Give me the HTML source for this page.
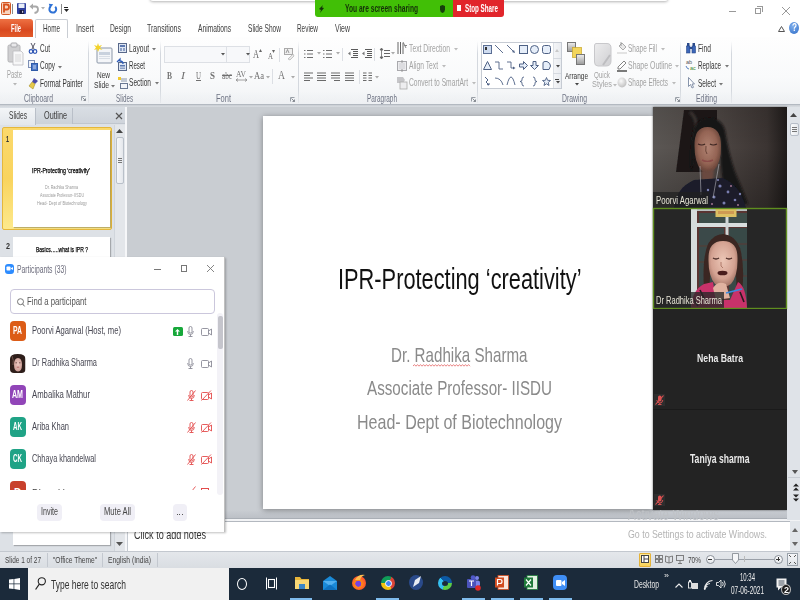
<!DOCTYPE html>
<html><head><meta charset="utf-8">
<style>
*{margin:0;padding:0;box-sizing:border-box}
html,body{width:800px;height:600px;overflow:hidden;background:#fff;font-family:"Liberation Sans",sans-serif;position:relative}
.a{position:absolute}
.t{position:absolute;white-space:nowrap;line-height:1;transform-origin:0 0}
svg{position:absolute;overflow:visible}
</style></head><body>
<div class="a" style="left:0;top:0;width:800px;height:37px;background:#fff"></div>
<div class="a" style="left:0;top:37px;width:800px;height:1px;background:#d3d7dd"></div>
<div class="a" style="left:0;top:37px;width:800px;height:67px;background:linear-gradient(#fefefe 0%,#f9fafb 60%,#f1f3f5 100%)"></div>
<div class="a" style="left:0;top:104px;width:800px;height:1px;background:#b3b9c1"></div>
<div class="a" style="left:0;top:105px;width:800px;height:2px;background:linear-gradient(#c9cdd3,#d8dce1)"></div>
<div class="a" style="left:0;top:107px;width:125px;height:444px;background:#dde1e6"></div>
<div class="a" style="left:125px;top:107px;width:2px;height:444px;background:#f6f7f9"></div>
<div class="a" style="left:127px;top:107px;width:673px;height:413px;background:#c9cdd2"></div>
<div class="a" style="left:127px;top:510px;width:660px;height:8px;background:linear-gradient(#c9cdd2,#bcc0c6)"></div>
<div class="a" style="left:127px;top:518px;width:673px;height:1px;background:#a9aeb5"></div>
<div class="a" style="left:127px;top:519px;width:673px;height:2px;background:#f2f3f5"></div>
<div class="a" style="left:127px;top:521px;width:673px;height:1px;background:#b3b8bf"></div>
<div class="a" style="left:263px;top:116px;width:390px;height:393px;background:#fff;box-shadow:0 1px 6px rgba(0,0,0,.38)"></div>
<div class="a" style="left:653px;top:107px;width:134px;height:403px;background:#232323;box-shadow:0 0 2px rgba(0,0,0,.6)"></div>
<div class="a" style="left:787px;top:107px;width:13px;height:413px;background:#dfe3e8"></div>
<div class="a" style="left:127px;top:522px;width:663px;height:29px;background:#fff;border-left:1px solid #c5cad1"></div>
<div class="a" style="left:790px;top:521px;width:10px;height:30px;background:#e1e5ea"></div>
<div class="a" style="left:0;top:551px;width:800px;height:17px;background:linear-gradient(#e4e7eb,#d9dde2);border-top:1px solid #c3c8cf"></div>
<div class="a" style="left:0;top:568px;width:800px;height:32px;background:#1b2a3a"></div>
<div class="a" style="left:28px;top:568px;width:201px;height:32px;background:#f1f1f1"></div>
<svg style="left:1px;top:2px" width="10" height="13"><rect x="0.5" y="0.5" width="9" height="12" rx="1" fill="#f8d5c0" stroke="#d35a26"/><path d="M3 10.5 V2.5 H5.8 Q8 2.5 8 5 Q8 7.5 5.8 7.5 H3" stroke="#d8501c" stroke-width="1.8" fill="none"/></svg>
<div class="a" style="left:12px;top:4px;width:1px;height:10px;background:#8b8b8b"></div>
<svg style="left:17px;top:3px" width="9" height="11"><rect x="0" y="0" width="9" height="11" rx="1" fill="#2e3f9e"/><rect x="1.5" y="0.5" width="6" height="4.5" fill="#e8eef8"/><rect x="2.5" y="7" width="4.5" height="4" fill="#1a1a40"/><rect x="5" y="7.8" width="1.2" height="2" fill="#ccd"/></svg>
<svg style="left:29px;top:3px" width="10" height="11"><path d="M3 3.5 L6.5 3.5 Q9 3.5 9 6.5 Q9 9.5 5.5 10" stroke="#a8a8a8" stroke-width="1.8" fill="none"/><path d="M0.5 3.5 L4 0.5 L4 6.5 Z" fill="#a8a8a8"/></svg>
<svg style="left:41px;top:7px" width="4" height="3"><path d="M0 0 L4 0 L2 2.5Z" fill="#b0b0b0"/></svg>
<svg style="left:48px;top:3px" width="10" height="11"><path d="M7.2 3.8 A3.4 3.4 0 1 1 2.6 3.6" stroke="#2f72d6" stroke-width="2" fill="none"/><path d="M0.8 0.8 L5.2 1.2 L2.2 5.2 Z" fill="#2f72d6"/></svg>
<div class="a" style="left:61px;top:4px;width:1px;height:10px;background:#8b8b8b"></div>
<div class="a" style="left:64px;top:7px;width:4px;height:1px;background:#222"></div>
<svg style="left:64px;top:9px" width="5" height="3"><path d="M0 0 L5 0 L2.5 3Z" fill="#222"/></svg>
<div class="a" style="left:729px;top:11px;width:7px;height:1px;background:#999"></div>
<div class="a" style="left:755px;top:8px;width:6px;height:6px;border:1px solid #999;background:#fff"></div>
<div class="a" style="left:757px;top:6px;width:6px;height:6px;border-top:1px solid #999;border-right:1px solid #999"></div>
<svg style="left:782px;top:7px" width="8" height="8"><path d="M0 0 L8 8 M8 0 L0 8" stroke="#999" stroke-width="1"/></svg>
<div class="a" style="left:150px;top:-8px;width:518px;height:9px;background:#fff;box-shadow:0 1px 3px rgba(0,0,0,.3);border-radius:3px"></div>
<div class="a" style="left:315px;top:0;width:138px;height:17px;background:#41bf06;border-radius:0 0 0 3px"></div>
<div class="a" style="left:453px;top:0;width:51px;height:17px;background:#e1252b;border-radius:0 0 3px 0"></div>
<svg style="left:318px;top:5px" width="7" height="8"><path d="M5 0 L1 4 L3 5 L2 8 L6 3 L4 2.5 Z" fill="#15380a"/></svg>
<span class="t" id="t0" style="left:344.5px;top:3.14px;font-size:11.59px;color:#15300a;font-weight:bold;font-family:'Liberation Sans',sans-serif;;transform:scaleX(0.5739);">You are screen sharing</span>
<svg style="left:440px;top:5px" width="5" height="8"><path d="M2.5 0 L5 1 L5 4.5 Q5 7 2.5 8 Q0 7 0 4.5 L0 1 Z" fill="#16400c"/></svg>
<div class="a" style="left:457px;top:5px;width:4px;height:6px;background:#fff"></div>
<span class="t" id="t1" style="left:465px;top:3.26px;font-size:10.87px;color:#fff;font-weight:bold;font-family:'Liberation Sans',sans-serif;;transform:scaleX(0.5756);">Stop Share</span>
<div class="a" style="left:0;top:19px;width:33px;height:18px;background:linear-gradient(#ee7143,#d9491f 60%,#e25a2a);border-radius:0 3px 0 0"></div>
<span class="t" id="t2" style="left:11px;top:23.58px;font-size:10.14px;color:#fff;font-weight:bold;font-family:'Liberation Sans',sans-serif;;transform:scaleX(0.5730);">File</span>
<div class="a" style="left:35px;top:19px;width:33px;height:19px;background:#fff;border:1px solid #c9cdd3;border-bottom:none;border-radius:2px 2px 0 0"></div>
<span class="t" id="t3" style="left:43px;top:23.58px;font-size:10.14px;color:#404040;font-weight:normal;font-family:'Liberation Sans',sans-serif;;transform:scaleX(0.6293);">Home</span>
<span class="t" id="t4" style="left:76px;top:23.58px;font-size:10.14px;color:#404040;font-weight:normal;font-family:'Liberation Sans',sans-serif;;transform:scaleX(0.7107);">Insert</span>
<span class="t" id="t5" style="left:110px;top:23.58px;font-size:10.14px;color:#404040;font-weight:normal;font-family:'Liberation Sans',sans-serif;;transform:scaleX(0.6660);">Design</span>
<span class="t" id="t6" style="left:147px;top:23.58px;font-size:10.14px;color:#404040;font-weight:normal;font-family:'Liberation Sans',sans-serif;;transform:scaleX(0.6917);">Transitions</span>
<span class="t" id="t7" style="left:198px;top:23.58px;font-size:10.14px;color:#404040;font-weight:normal;font-family:'Liberation Sans',sans-serif;;transform:scaleX(0.6588);">Animations</span>
<span class="t" id="t8" style="left:248px;top:23.58px;font-size:10.14px;color:#404040;font-weight:normal;font-family:'Liberation Sans',sans-serif;;transform:scaleX(0.6514);">Slide Show</span>
<span class="t" id="t9" style="left:297px;top:23.58px;font-size:10.14px;color:#404040;font-weight:normal;font-family:'Liberation Sans',sans-serif;;transform:scaleX(0.6325);">Review</span>
<span class="t" id="t10" style="left:335px;top:23.58px;font-size:10.14px;color:#404040;font-weight:normal;font-family:'Liberation Sans',sans-serif;;transform:scaleX(0.6892);">View</span>
<svg style="left:778px;top:26px" width="7" height="6"><path d="M0.5 5.5 L3.5 0.5 L6.5 5.5 Z" stroke="#555" stroke-width="1" fill="none"/></svg>
<div class="a" style="left:789px;top:22px;width:10px;height:12px;border-radius:50%;background:radial-gradient(circle at 40% 35%,#7fb0ee,#2f6bc6)"></div>
<span class="t" id="t11" style="left:791.5px;top:22.88px;font-size:10.14px;color:#fff;font-weight:bold;font-family:'Liberation Sans',sans-serif;;transform:scaleX(0.8081);">?</span>
<div class="a" style="left:0;top:92px;width:800px;height:12px;background:linear-gradient(rgba(240,242,245,0),#eef0f3)"></div>
<div class="a" style="left:88px;top:41px;width:1px;height:62px;background:linear-gradient(rgba(210,214,220,0),#d4d8de 20%,#d4d8de 80%,rgba(210,214,220,.3))"></div>
<div class="a" style="left:160px;top:41px;width:1px;height:62px;background:linear-gradient(rgba(210,214,220,0),#d4d8de 20%,#d4d8de 80%,rgba(210,214,220,.3))"></div>
<div class="a" style="left:298px;top:41px;width:1px;height:62px;background:linear-gradient(rgba(210,214,220,0),#d4d8de 20%,#d4d8de 80%,rgba(210,214,220,.3))"></div>
<div class="a" style="left:477px;top:41px;width:1px;height:62px;background:linear-gradient(rgba(210,214,220,0),#d4d8de 20%,#d4d8de 80%,rgba(210,214,220,.3))"></div>
<div class="a" style="left:680px;top:41px;width:1px;height:62px;background:linear-gradient(rgba(210,214,220,0),#d4d8de 20%,#d4d8de 80%,rgba(210,214,220,.3))"></div>
<div class="a" style="left:731px;top:41px;width:1px;height:62px;background:linear-gradient(rgba(210,214,220,0),#d4d8de 20%,#d4d8de 80%,rgba(210,214,220,.3))"></div>
<svg style="left:7px;top:42px" width="16" height="24"><rect x="1" y="3" width="12" height="17" rx="1.5" fill="#cfcfd1" stroke="#b4b4b7"/><rect x="4" y="1" width="6" height="4" rx="1" fill="#e8e8ea" stroke="#a9a9ad"/><path d="M6 9 L14 9 L16 11 L16 23 L6 23 Z" fill="#f7f7f8" stroke="#bcbcc0" stroke-width="0.8"/><path d="M8 13h6M8 15h6M8 17h6M8 19h6" stroke="#c9c9cc" stroke-width="0.7"/></svg>
<span class="t" id="t12" style="left:7px;top:70.08px;font-size:10.14px;color:#a3a3a3;font-weight:normal;font-family:'Liberation Sans',sans-serif;;transform:scaleX(0.5790);">Paste</span>
<svg style="left:13.0px;top:83px" width="4" height="3"><path d="M0 0 L4 0 L2 2.5Z" fill="#b5b5b5"/></svg>
<svg style="left:29px;top:43px" width="8" height="11"><path d="M2 0 L5 6 M6 0 L3 6" stroke="#556" stroke-width="1"/><circle cx="2" cy="8.5" r="1.8" stroke="#2c54b4" stroke-width="1.2" fill="none"/><circle cx="6" cy="8.5" r="1.8" stroke="#2c54b4" stroke-width="1.2" fill="none"/></svg>
<span class="t" id="t13" style="left:40px;top:44.08px;font-size:10.14px;color:#363636;font-weight:normal;font-family:'Liberation Sans',sans-serif;;transform:scaleX(0.6343);">Cut</span>
<svg style="left:28px;top:60px" width="10" height="11"><rect x="0.5" y="0.5" width="6" height="7" fill="#eef2fa" stroke="#7d8fb5"/><rect x="3.5" y="3.5" width="6" height="7" fill="#4c79c9" stroke="#2f5aa8"/><path d="M5 6h3M5 8h3" stroke="#fff" stroke-width="0.7"/></svg>
<span class="t" id="t14" style="left:40px;top:61.08px;font-size:10.14px;color:#363636;font-weight:normal;font-family:'Liberation Sans',sans-serif;;transform:scaleX(0.6345);">Copy</span>
<svg style="left:58.0px;top:66px" width="4" height="3"><path d="M0 0 L4 0 L2 2.5Z" fill="#777"/></svg>
<svg style="left:29px;top:78px" width="9" height="11"><path d="M5 0 L9 3 L6 6 L3 4Z" fill="#4a4aa8"/><path d="M3 4 L6 6 L4 11 L0 8Z" fill="#e6c84a" stroke="#a8902a" stroke-width="0.6"/></svg>
<span class="t" id="t15" style="left:40px;top:79.08px;font-size:10.14px;color:#363636;font-weight:normal;font-family:'Liberation Sans',sans-serif;;transform:scaleX(0.6421);">Format Painter</span>
<span class="t" id="t16" style="left:24px;top:94.08px;font-size:10.14px;color:#6f7484;font-weight:normal;font-family:'Liberation Sans',sans-serif;;transform:scaleX(0.6691);">Clipboard</span>
<svg style="left:81px;top:96px" width="5" height="5"><path d="M0.5 4.5 L0.5 0.5 L4.5 0.5" stroke="#9aa0a8" fill="none" stroke-width="1"/><path d="M1.5 1.5 L4.5 4.5 M4.5 2.5 L4.5 4.5 L2.5 4.5" stroke="#7a8088" fill="none" stroke-width="0.9"/></svg>
<svg style="left:94px;top:43px" width="19" height="22"><rect x="3" y="5" width="15" height="15" rx="1" fill="#f4f6f9" stroke="#8b97a8"/><rect x="5" y="9" width="11" height="3" fill="#c9d2de"/><rect x="5" y="13" width="11" height="1" fill="#d8dee6"/><rect x="5" y="15" width="11" height="1" fill="#d8dee6"/><path d="M4 0 L5 3 L8 2 L6 4.5 L8.5 7 L5.3 6 L4 9 L3 6 L0 7 L2 4.5 L0 2 L3 3Z" fill="#f3d22a"/></svg>
<span class="t" id="t17" style="left:97px;top:70.56px;font-size:8.99px;color:#363636;font-weight:normal;font-family:'Liberation Sans',sans-serif;;transform:scaleX(0.7228);">New</span>
<span class="t" id="t18" style="left:94px;top:80.54px;font-size:9.13px;color:#363636;font-weight:normal;font-family:'Liberation Sans',sans-serif;;transform:scaleX(0.7390);">Slide</span>
<svg style="left:110.5px;top:85px" width="4" height="3"><path d="M0 0 L4 0 L2 2.5Z" fill="#777"/></svg>
<svg style="left:118px;top:43px" width="9" height="10"><rect x="0.5" y="0.5" width="8" height="9" fill="#dfe7f3" stroke="#58688a"/><rect x="2" y="2" width="5" height="2" fill="#5c78b0"/><rect x="2" y="5" width="2" height="3" fill="#8da0c5"/><rect x="5" y="5" width="2" height="3" fill="#8da0c5"/></svg>
<span class="t" id="t19" style="left:129px;top:44.08px;font-size:10.14px;color:#363636;font-weight:normal;font-family:'Liberation Sans',sans-serif;;transform:scaleX(0.6578);">Layout</span>
<svg style="left:151.5px;top:48px" width="4" height="3"><path d="M0 0 L4 0 L2 2.5Z" fill="#777"/></svg>
<svg style="left:117px;top:59px" width="10" height="12"><rect x="1.5" y="3.5" width="8" height="8" fill="#dfe7f3" stroke="#58688a"/><rect x="3" y="6" width="5" height="1.5" fill="#5c78b0"/><rect x="3" y="8.5" width="5" height="1.5" fill="#8da0c5"/><path d="M0 3 L3 0 L3 2 Q6 2 6 5" stroke="#2d5bb8" stroke-width="1.3" fill="none"/></svg>
<span class="t" id="t20" style="left:129px;top:61.08px;font-size:10.14px;color:#363636;font-weight:normal;font-family:'Liberation Sans',sans-serif;;transform:scaleX(0.6048);">Reset</span>
<svg style="left:118px;top:77px" width="10" height="12"><rect x="0" y="0" width="3" height="3" fill="#f2c92b"/><path d="M3 2 H9 M3 4 H9" stroke="#7d8aa0" stroke-width="0.9"/><rect x="2.5" y="6.5" width="7" height="5" fill="#f2f4f8" stroke="#6a7892"/></svg>
<span class="t" id="t21" style="left:129px;top:78.08px;font-size:10.14px;color:#363636;font-weight:normal;font-family:'Liberation Sans',sans-serif;;transform:scaleX(0.6512);">Section</span>
<svg style="left:154.5px;top:82px" width="4" height="3"><path d="M0 0 L4 0 L2 2.5Z" fill="#777"/></svg>
<span class="t" id="t22" style="left:116px;top:94.08px;font-size:10.14px;color:#6f7484;font-weight:normal;font-family:'Liberation Sans',sans-serif;;transform:scaleX(0.6164);">Slides</span>
<div class="a" style="left:164px;top:46px;width:86px;height:17px;border:1px solid #dde0e5;background:#f7f8fa"></div>
<div class="a" style="left:226px;top:46px;width:1px;height:17px;background:#dde0e5"></div>
<svg style="left:220.5px;top:53px" width="4" height="3"><path d="M0 0 L4 0 L2 2.5Z" fill="#555"/></svg>
<svg style="left:245.5px;top:53px" width="4" height="3"><path d="M0 0 L4 0 L2 2.5Z" fill="#555"/></svg>
<span class="t" id="t23" style="left:253px;top:49.14px;font-size:11.59px;color:#666;font-weight:normal;font-family:'Liberation Serif',sans-serif;;transform:scaleX(0.7164);">A</span>
<svg style="left:259px;top:49px" width="3" height="3"><path d="M0 3 L1.5 0 L3 3Z" fill="#666"/></svg>
<span class="t" id="t24" style="left:268px;top:51.61px;font-size:8.70px;color:#666;font-weight:normal;font-family:'Liberation Serif',sans-serif;;transform:scaleX(0.7960);">A</span>
<svg style="left:272px;top:50px" width="3" height="3"><path d="M0 0 L3 0 L1.5 3Z" fill="#666"/></svg>
<div class="a" style="left:279px;top:48px;width:1px;height:14px;background:#dcdfe4"></div>
<svg style="left:284px;top:48px" width="10" height="12"><rect x="0.5" y="0.5" width="8" height="6" fill="#f0f0f0" stroke="#aaa"/><path d="M2 5 L3.5 1.5 L5 5" stroke="#777" stroke-width="0.7" fill="none"/><path d="M4 11 L9 6 L10 8 L6 12Z" fill="#e9e9e9" stroke="#a5a5a5" stroke-width="0.6"/></svg>
<span class="t" id="t25" style="left:167px;top:71.38px;font-size:10.14px;color:#707070;font-weight:normal;font-family:'Liberation Serif',sans-serif;font-weight:bold;transform:scaleX(0.7390);">B</span>
<span class="t" id="t26" style="left:181px;top:71.38px;font-size:10.14px;color:#707070;font-weight:normal;font-family:'Liberation Serif',sans-serif;font-style:italic;transform:scaleX(1.1852);">I</span>
<span class="t" id="t27" style="left:196px;top:71.38px;font-size:10.14px;color:#707070;font-weight:normal;font-family:'Liberation Serif',sans-serif;text-decoration:underline;transform:scaleX(0.6838);">U</span>
<span class="t" id="t28" style="left:210px;top:71.38px;font-size:10.14px;color:#707070;font-weight:normal;font-family:'Liberation Serif',sans-serif;font-weight:bold;transform:scaleX(0.8864);">S</span>
<span class="t" id="t29" style="left:222px;top:71.38px;font-size:10.14px;color:#707070;font-weight:normal;font-family:'Liberation Serif',sans-serif;text-decoration:line-through;transform:scaleX(0.7111);">abc</span>
<span class="t" id="t30" style="left:236px;top:69.61px;font-size:8.70px;color:#707070;font-weight:normal;font-family:'Liberation Serif',sans-serif;;transform:scaleX(0.8743);">AV</span>
<svg style="left:236px;top:78px" width="11" height="4"><path d="M0 2 H11 M0 2 L2 0.5 M0 2 L2 3.5 M11 2 L9 0.5 M11 2 L9 3.5" stroke="#8a8a8a" stroke-width="0.8" fill="none"/></svg>
<svg style="left:248.5px;top:76px" width="4" height="3"><path d="M0 0 L4 0 L2 2.5Z" fill="#aaa"/></svg>
<span class="t" id="t31" style="left:254px;top:71.38px;font-size:10.14px;color:#707070;font-weight:normal;font-family:'Liberation Serif',sans-serif;;transform:scaleX(0.8466);">Aa</span>
<svg style="left:265.5px;top:76px" width="4" height="3"><path d="M0 0 L4 0 L2 2.5Z" fill="#aaa"/></svg>
<div class="a" style="left:272px;top:69px;width:1px;height:15px;background:#dcdfe4"></div>
<span class="t" id="t32" style="left:278px;top:70.14px;font-size:11.59px;color:#777;font-weight:normal;font-family:'Liberation Serif',sans-serif;;transform:scaleX(0.8358);">A</span>
<svg style="left:290.5px;top:76px" width="4" height="3"><path d="M0 0 L4 0 L2 2.5Z" fill="#aaa"/></svg>
<span class="t" id="t33" style="left:216px;top:94.08px;font-size:10.14px;color:#6f7484;font-weight:normal;font-family:'Liberation Sans',sans-serif;;transform:scaleX(0.7402);">Font</span>
<svg style="left:290px;top:97px" width="5" height="5"><path d="M0.5 4.5 L0.5 0.5 L4.5 0.5" stroke="#9aa0a8" fill="none" stroke-width="1"/><path d="M1.5 1.5 L4.5 4.5 M4.5 2.5 L4.5 4.5 L2.5 4.5" stroke="#7a8088" fill="none" stroke-width="0.9"/></svg>
<svg style="left:304px;top:49px" width="9" height="10"><path d="M3 1.5H9M3 5H9M3 8.5H9" stroke="#6d6d6d" stroke-width="1"/><path d="M0 1.5H1.5M0 5H1.5M0 8.5H1.5" stroke="#777" stroke-width="1.2"/></svg>
<svg style="left:316.5px;top:52px" width="4" height="3"><path d="M0 0 L4 0 L2 2.5Z" fill="#aaa"/></svg>
<svg style="left:323px;top:49px" width="9" height="10"><path d="M3 1.5H9M3 5H9M3 8.5H9" stroke="#6d6d6d" stroke-width="1"/><path d="M0 1.5H1.5M0 5H1.5M0 8.5H1.5" stroke="#777" stroke-width="1.2"/></svg>
<svg style="left:335.5px;top:52px" width="4" height="3"><path d="M0 0 L4 0 L2 2.5Z" fill="#aaa"/></svg>
<div class="a" style="left:342px;top:48px;width:1px;height:13px;background:#dcdfe4"></div>
<svg style="left:348px;top:48px" width="10" height="11"><path d="M3 1.5H10M5 3.5H10M5 5.5H10M5 7.5H10M3 9.5H10" stroke="#5a5a5a" stroke-width="1"/><path d="M0 5.5 L2.5 3.5 L2.5 7.5Z" fill="#777"/></svg>
<svg style="left:362px;top:48px" width="10" height="11"><path d="M3 1.5H10M5 3.5H10M5 5.5H10M5 7.5H10M3 9.5H10" stroke="#5a5a5a" stroke-width="1"/><path d="M0 5.5 L2.5 3.5 L2.5 7.5Z" fill="#777"/></svg>
<div class="a" style="left:374px;top:48px;width:1px;height:13px;background:#dcdfe4"></div>
<svg style="left:380px;top:48px" width="10" height="11"><path d="M4 2.5H10M4 5.5H10M4 8.5H10" stroke="#666" stroke-width="1"/><path d="M1.5 0 L0 2 H3Z M1.5 11 L0 9 H3Z M1.5 2 V9" stroke="#666" stroke-width="0.8" fill="#666"/></svg>
<svg style="left:390.5px;top:52px" width="4" height="3"><path d="M0 0 L4 0 L2 2.5Z" fill="#aaa"/></svg>
<svg style="left:304px;top:72px" width="9" height="10"><path d="M0 1H9M0 3.5H6M0 6H9M0 8.5H6" stroke="#6a6a6a" stroke-width="1.2"/></svg>
<svg style="left:317px;top:72px" width="9" height="10"><path d="M0 1H9M0 3.5H9M0 6H9M0 8.5H9" stroke="#6a6a6a" stroke-width="1.2"/></svg>
<svg style="left:331px;top:72px" width="9" height="10"><path d="M0 1H9M0 3.5H9M0 6H9M3 8.5H9" stroke="#6a6a6a" stroke-width="1.2"/></svg>
<svg style="left:345px;top:72px" width="9" height="10"><path d="M0 1H9M0 3.5H9M0 6H9M0 8.5H9" stroke="#6a6a6a" stroke-width="1.2"/></svg>
<div class="a" style="left:359px;top:70px;width:1px;height:14px;background:#dcdfe4"></div>
<svg style="left:363px;top:72px" width="9" height="10"><path d="M0 1H3.5M5.5 1H9M0 3.5H3.5M5.5 3.5H9M0 6H3.5M5.5 6H9M0 8.5H3.5M5.5 8.5H9" stroke="#6a6a6a" stroke-width="1.2"/></svg>
<svg style="left:374.5px;top:76px" width="4" height="3"><path d="M0 0 L4 0 L2 2.5Z" fill="#aaa"/></svg>
<svg style="left:397px;top:42px" width="10" height="12"><path d="M1 0V12M3.5 0V12M6 1V12" stroke="#555" stroke-width="0.9"/><path d="M6 0 L9 6 M7.5 3.5 L10 3.5" stroke="#777" stroke-width="0.9"/></svg>
<span class="t" id="t34" style="left:409px;top:44.08px;font-size:10.14px;color:#a3a3a3;font-weight:normal;font-family:'Liberation Sans',sans-serif;;transform:scaleX(0.6684);">Text Direction</span>
<svg style="left:453.5px;top:48px" width="4" height="3"><path d="M0 0 L4 0 L2 2.5Z" fill="#bbb"/></svg>
<svg style="left:397px;top:60px" width="10" height="12"><rect x="0.5" y="1.5" width="9" height="9" fill="#ececee" stroke="#a9a9ad"/><path d="M2 4H8M2 6H8M2 8H8" stroke="#c7c7ca" stroke-width="0.8"/><path d="M5 0V3M5 9V12" stroke="#888" stroke-width="0.8"/></svg>
<span class="t" id="t35" style="left:409px;top:61.08px;font-size:10.14px;color:#a3a3a3;font-weight:normal;font-family:'Liberation Sans',sans-serif;;transform:scaleX(0.6633);">Align Text</span>
<svg style="left:441.5px;top:65px" width="4" height="3"><path d="M0 0 L4 0 L2 2.5Z" fill="#bbb"/></svg>
<svg style="left:397px;top:77px" width="10" height="12"><path d="M0 0 H6 L8 3 L6 6 H0Z" fill="#c5c5c8"/><rect x="3" y="5" width="7" height="7" fill="#ededef" stroke="#aaa" stroke-width="0.8"/></svg>
<span class="t" id="t36" style="left:409px;top:78.08px;font-size:10.14px;color:#a3a3a3;font-weight:normal;font-family:'Liberation Sans',sans-serif;;transform:scaleX(0.6594);">Convert to SmartArt</span>
<svg style="left:471.5px;top:82px" width="4" height="3"><path d="M0 0 L4 0 L2 2.5Z" fill="#bbb"/></svg>
<span class="t" id="t37" style="left:367px;top:94.38px;font-size:10.14px;color:#6f7484;font-weight:normal;font-family:'Liberation Sans',sans-serif;;transform:scaleX(0.6343);">Paragraph</span>
<svg style="left:471px;top:97px" width="5" height="5"><path d="M0.5 4.5 L0.5 0.5 L4.5 0.5" stroke="#9aa0a8" fill="none" stroke-width="1"/><path d="M1.5 1.5 L4.5 4.5 M4.5 2.5 L4.5 4.5 L2.5 4.5" stroke="#7a8088" fill="none" stroke-width="0.9"/></svg>
<div class="a" style="left:481px;top:42px;width:81px;height:47px;border:1px solid #c6cbd3;background:#fff"></div>
<div class="a" style="left:553px;top:43px;width:8px;height:45px;background:linear-gradient(90deg,#f4f5f7,#e9ecf0);border-left:1px solid #dde1e6"></div>
<div class="a" style="left:553px;top:58px;width:8px;height:1px;background:#d5d9df"></div>
<div class="a" style="left:553px;top:73px;width:8px;height:1px;background:#d5d9df"></div>
<svg style="left:555px;top:49px" width="4" height="3"><path d="M0 3 L2 0 L4 3Z" fill="#c9c9c9"/></svg>
<svg style="left:555.5px;top:65px" width="4" height="3"><path d="M0 0 L4 0 L2 2.5Z" fill="#444"/></svg>
<div class="a" style="left:555px;top:79px;width:4px;height:1px;background:#444"></div>
<svg style="left:555.5px;top:81px" width="4" height="3"><path d="M0 0 L4 0 L2 2.5Z" fill="#444"/></svg>
<svg style="left:483px;top:45px" width="9" height="9"><rect x="0.5" y="0.5" width="8" height="8" fill="#cfdcf0" stroke="#5a6e94"/><rect x="2" y="2" width="2" height="3" fill="#333"/></svg>
<svg style="left:495px;top:45px" width="9" height="9"><path d="M0 0 L8 8" stroke="#4e6185" stroke-width="0.9"/></svg>
<svg style="left:507px;top:45px" width="9" height="9"><path d="M0 0 L7 7" stroke="#4e6185" stroke-width="0.9"/><path d="M8 8 L5 7 L7 5Z" fill="#4e6185"/></svg>
<svg style="left:519px;top:45px" width="9" height="9"><rect x="0.5" y="0.5" width="8" height="8" fill="#e6eef9" stroke="#4e6185"/></svg>
<svg style="left:530px;top:45px" width="9" height="9"><circle cx="4.5" cy="4.5" r="4" fill="#e6eef9" stroke="#4e6185"/></svg>
<svg style="left:542px;top:45px" width="9" height="9"><rect x="0.5" y="0.5" width="8" height="8" rx="2" fill="#e6eef9" stroke="#4e6185"/></svg>
<svg style="left:483px;top:61px" width="9" height="9"><path d="M4.5 0.5 L8.5 8.5 L0.5 8.5Z" fill="#e6eef9" stroke="#4e6185"/></svg>
<svg style="left:495px;top:61px" width="9" height="9"><path d="M0 1 H4 V8 H8" stroke="#4e6185" fill="none" stroke-width="0.9"/></svg>
<svg style="left:507px;top:61px" width="9" height="9"><path d="M0 1 H4 V7 H7" stroke="#4e6185" fill="none" stroke-width="0.9"/><path d="M8.5 7 L6 5.5 L6 8.5Z" fill="#4e6185"/></svg>
<svg style="left:519px;top:61px" width="9" height="9"><path d="M0.5 3 H4.5 V0.5 L8.5 4.5 L4.5 8.5 V6 H0.5Z" fill="#e6eef9" stroke="#4e6185"/></svg>
<svg style="left:530px;top:61px" width="9" height="9"><path d="M3 0.5 H6 V4.5 H8.5 L4.5 8.5 L0.5 4.5 H3Z" fill="#e6eef9" stroke="#4e6185"/></svg>
<svg style="left:542px;top:61px" width="9" height="9"><path d="M1 8.5 V2 Q1 0.5 3 0.5 L5 0.5 Q8.5 2 8.5 5 L7 8.5Z" fill="#e6eef9" stroke="#4e6185"/></svg>
<svg style="left:483px;top:77px" width="9" height="9"><path d="M2 0 L5 3 L3 5 L6 8 M6 8 L4 7.5 M6 8 L6 6" stroke="#4e6185" fill="none" stroke-width="1"/></svg>
<svg style="left:495px;top:77px" width="9" height="9"><path d="M0 1 Q6 1 8 8" stroke="#4e6185" fill="none" stroke-width="0.9"/></svg>
<svg style="left:507px;top:77px" width="9" height="9"><path d="M0 8 Q2 0 4 0 Q6 0 8 8" stroke="#4e6185" fill="none" stroke-width="0.9"/></svg>
<svg style="left:519px;top:77px" width="9" height="9"><path d="M5 0 Q3 0 3 2 V3 Q3 4.5 1 4.5 Q3 4.5 3 6 V7 Q3 9 5 9" stroke="#4e6185" fill="none" stroke-width="0.9"/></svg>
<svg style="left:530px;top:77px" width="9" height="9"><path d="M3 0 Q5 0 5 2 V3 Q5 4.5 7 4.5 Q5 4.5 5 6 V7 Q5 9 3 9" stroke="#4e6185" fill="none" stroke-width="0.9"/></svg>
<svg style="left:542px;top:77px" width="9" height="9"><path d="M4.5 0.5 L5.6 3.3 L8.5 3.5 L6.3 5.4 L7 8.5 L4.5 6.8 L2 8.5 L2.7 5.4 L0.5 3.5 L3.4 3.3Z" fill="#e6eef9" stroke="#4e6185" stroke-width="0.9"/></svg>
<svg style="left:567px;top:42px" width="19" height="25"><rect x="0.5" y="0.5" width="8" height="9" fill="url(#g1)" stroke="#777"/><rect x="5.5" y="5.5" width="9" height="10" fill="#f3d55b" stroke="#c8a628" stroke-width="0.7"/><rect x="9.5" y="12.5" width="8" height="10" fill="url(#g1)" stroke="#777"/><defs><linearGradient id="g1" x1="0" y1="0" x2="0" y2="1"><stop offset="0" stop-color="#eee"/><stop offset="1" stop-color="#9a9a9a"/></linearGradient></defs></svg>
<span class="t" id="t38" style="left:565px;top:70.77px;font-size:9.57px;color:#333;font-weight:normal;font-family:'Liberation Sans',sans-serif;;transform:scaleX(0.6758);">Arrange</span>
<svg style="left:574.5px;top:83px" width="4" height="3"><path d="M0 0 L4 0 L2 2.5Z" fill="#444"/></svg>
<svg style="left:594px;top:43px" width="18" height="24"><path d="M2 0.5 H13 Q17 0.5 17 5 V18 Q17 23 12 23 H4 Q0.5 23 0.5 19 V3 Q0.5 0.5 2 0.5Z" fill="url(#g2)" stroke="#c8c8cb"/><path d="M9 22 L16 12" stroke="#bdbdc0" stroke-width="2"/><defs><linearGradient id="g2" x1="0" y1="0" x2="1" y2="1"><stop offset="0" stop-color="#ededee"/><stop offset="1" stop-color="#cfcfd2"/></linearGradient></defs></svg>
<span class="t" id="t39" style="left:594px;top:70.82px;font-size:9.28px;color:#a3a3a3;font-weight:normal;font-family:'Liberation Sans',sans-serif;;transform:scaleX(0.6755);">Quick</span>
<span class="t" id="t40" style="left:592px;top:80.32px;font-size:9.28px;color:#a3a3a3;font-weight:normal;font-family:'Liberation Sans',sans-serif;;transform:scaleX(0.7926);">Styles</span>
<svg style="left:612.5px;top:84px" width="4" height="3"><path d="M0 0 L4 0 L2 2.5Z" fill="#bbb"/></svg>
<svg style="left:617px;top:42px" width="10" height="12"><path d="M2 4 L5 1 L9 5 L6 8Z" fill="#e8e8e8" stroke="#999" stroke-width="0.8"/><path d="M4 0 V4" stroke="#888" stroke-width="0.8"/><rect x="0" y="10" width="10" height="2" fill="#e3e3e3"/></svg>
<span class="t" id="t41" style="left:628px;top:44.08px;font-size:10.14px;color:#a3a3a3;font-weight:normal;font-family:'Liberation Sans',sans-serif;;transform:scaleX(0.6440);">Shape Fill</span>
<svg style="left:660.5px;top:48px" width="4" height="3"><path d="M0 0 L4 0 L2 2.5Z" fill="#bbb"/></svg>
<svg style="left:617px;top:60px" width="10" height="12"><path d="M1 7 L7 1 L9 3 L3 9 H1Z" fill="#fff" stroke="#666" stroke-width="0.8"/><rect x="0" y="10" width="10" height="2" fill="#7a7a7a"/></svg>
<span class="t" id="t42" style="left:628px;top:61.08px;font-size:10.14px;color:#a3a3a3;font-weight:normal;font-family:'Liberation Sans',sans-serif;;transform:scaleX(0.6857);">Shape Outline</span>
<svg style="left:674.5px;top:65px" width="4" height="3"><path d="M0 0 L4 0 L2 2.5Z" fill="#bbb"/></svg>
<svg style="left:617px;top:77px" width="10" height="11"><ellipse cx="5" cy="5.5" rx="4.5" ry="5" fill="url(#g3)"/><defs><radialGradient id="g3" cx="0.4" cy="0.35" r="0.7"><stop offset="0" stop-color="#fafafa"/><stop offset="1" stop-color="#bdbdbd"/></radialGradient></defs></svg>
<span class="t" id="t43" style="left:628px;top:78.08px;font-size:10.14px;color:#a3a3a3;font-weight:normal;font-family:'Liberation Sans',sans-serif;;transform:scaleX(0.6363);">Shape Effects</span>
<svg style="left:671.5px;top:82px" width="4" height="3"><path d="M0 0 L4 0 L2 2.5Z" fill="#bbb"/></svg>
<span class="t" id="t44" style="left:562px;top:94.38px;font-size:10.14px;color:#6f7484;font-weight:normal;font-family:'Liberation Sans',sans-serif;;transform:scaleX(0.6731);">Drawing</span>
<svg style="left:675px;top:97px" width="5" height="5"><path d="M0.5 4.5 L0.5 0.5 L4.5 0.5" stroke="#9aa0a8" fill="none" stroke-width="1"/><path d="M1.5 1.5 L4.5 4.5 M4.5 2.5 L4.5 4.5 L2.5 4.5" stroke="#7a8088" fill="none" stroke-width="0.9"/></svg>
<svg style="left:686px;top:43px" width="10" height="11"><rect x="0.5" y="3" width="3.5" height="7" fill="#3c66b8" stroke="#2a4a8a" stroke-width="0.6"/><rect x="6" y="3" width="3.5" height="7" fill="#3c66b8" stroke="#2a4a8a" stroke-width="0.6"/><rect x="1" y="0" width="2.5" height="3" fill="#2a4a8a"/><rect x="6.5" y="0" width="2.5" height="3" fill="#2a4a8a"/><rect x="3.5" y="4" width="3" height="2" fill="#2a4a8a"/></svg>
<span class="t" id="t45" style="left:698px;top:44.08px;font-size:10.14px;color:#363636;font-weight:normal;font-family:'Liberation Sans',sans-serif;;transform:scaleX(0.6598);">Find</span>
<svg style="left:686px;top:59px" width="10" height="12"><text x="0" y="5" font-size="5.5" font-family="Liberation Sans" fill="#555">ab</text><text x="4" y="11" font-size="5.5" font-family="Liberation Sans" fill="#3a8a2a">ac</text><path d="M0 7 Q1 10 3 10" stroke="#3060b0" stroke-width="0.8" fill="none"/></svg>
<span class="t" id="t46" style="left:698px;top:61.08px;font-size:10.14px;color:#363636;font-weight:normal;font-family:'Liberation Sans',sans-serif;;transform:scaleX(0.6190);">Replace</span>
<svg style="left:724.5px;top:65px" width="4" height="3"><path d="M0 0 L4 0 L2 2.5Z" fill="#777"/></svg>
<svg style="left:688px;top:77px" width="7" height="12"><path d="M0.5 0.5 L0.5 9.5 L2.5 7.5 L4 11 L5.5 10.3 L4 7 L6.5 7Z" fill="#fff" stroke="#6a7a95" stroke-width="0.8"/></svg>
<span class="t" id="t47" style="left:698px;top:79.08px;font-size:10.14px;color:#363636;font-weight:normal;font-family:'Liberation Sans',sans-serif;;transform:scaleX(0.6396);">Select</span>
<svg style="left:718.5px;top:83px" width="4" height="3"><path d="M0 0 L4 0 L2 2.5Z" fill="#777"/></svg>
<span class="t" id="t48" style="left:696px;top:94.38px;font-size:10.14px;color:#6f7484;font-weight:normal;font-family:'Liberation Sans',sans-serif;;transform:scaleX(0.6781);">Editing</span>
<div class="a" style="left:0;top:107px;width:125px;height:17px;background:linear-gradient(#d9dee4,#cfd4db);border-bottom:1px solid #c0c6ce"></div>
<div class="a" style="left:0;top:108px;width:36px;height:17px;background:linear-gradient(#f3f5f7,#e3e7ec);border-right:1px solid #b9bfc8"></div>
<div class="a" style="left:36px;top:108px;width:37px;height:16px;background:linear-gradient(#dadfe5,#ccd2d9);border-right:1px solid #b9bfc8"></div>
<span class="t" id="t49" style="left:9px;top:111.38px;font-size:10.14px;color:#3a3a3a;font-weight:normal;font-family:'Liberation Sans',sans-serif;;transform:scaleX(0.6527);">Slides</span>
<span class="t" id="t50" style="left:44px;top:111.38px;font-size:10.14px;color:#3a3a3a;font-weight:normal;font-family:'Liberation Sans',sans-serif;;transform:scaleX(0.7167);">Outline</span>
<svg style="left:116px;top:113px" width="6" height="6"><path d="M0 0 L6 6 M6 0 L0 6" stroke="#555" stroke-width="1.2"/></svg>
<div class="a" style="left:114px;top:125px;width:11px;height:426px;background:#e3e6ea;border-left:1px solid #d0d5db"></div>
<svg style="left:116px;top:129px" width="7" height="4"><path d="M0 4 L3.5 0 L7 4Z" fill="#444"/></svg>
<div class="a" style="left:116px;top:137px;width:8px;height:47px;background:linear-gradient(90deg,#f7f8fa,#e4e7ec);border:1px solid #b9c0c9;border-radius:2px"></div>
<div class="a" style="left:118px;top:158px;width:4px;height:1px;background:#777"></div><div class="a" style="left:118px;top:160px;width:4px;height:1px;background:#777"></div><div class="a" style="left:118px;top:162px;width:4px;height:1px;background:#777"></div>
<svg style="left:116px;top:542px" width="7" height="4"><path d="M0 0 L7 0 L3.5 4Z" fill="#555"/></svg>
<div class="a" style="left:2px;top:127px;width:110px;height:103px;background:linear-gradient(#fbd96c,#f9d45e 50%,#fde98c);border:1px solid #e5b73b;border-radius:2px"></div>
<div class="a" style="left:13px;top:130px;width:97px;height:97px;background:#fff;box-shadow:1px 1px 1px rgba(0,0,0,.25)"></div>
<span class="t" id="t51" style="left:6px;top:134.61px;font-size:8.70px;color:#333;font-weight:bold;font-family:'Liberation Sans',sans-serif;;transform:scaleX(0.6194);">1</span>
<span class="t" id="t52" style="left:32px;top:166.84px;font-size:7.25px;color:#000;font-weight:normal;font-family:'Liberation Sans',sans-serif;-webkit-text-stroke:0.25px #000;transform:scaleX(0.7162);">IPR-Protecting ‘creativity’</span>
<span class="t" id="t53" style="left:45px;top:186.23px;font-size:4.78px;color:#999;font-weight:normal;font-family:'Liberation Sans',sans-serif;;transform:scaleX(0.7688);">Dr. Radhika Sharma</span>
<span class="t" id="t54" style="left:40px;top:194.23px;font-size:4.78px;color:#999;font-weight:normal;font-family:'Liberation Sans',sans-serif;;transform:scaleX(0.7586);">Associate Professor- IISDU</span>
<span class="t" id="t55" style="left:37px;top:202.23px;font-size:4.78px;color:#999;font-weight:normal;font-family:'Liberation Sans',sans-serif;;transform:scaleX(0.8205);">Head- Dept of Biotechnology</span>
<div class="a" style="left:13px;top:237px;width:97px;height:97px;background:#fff;box-shadow:1px 1px 1px rgba(0,0,0,.25)"></div>
<span class="t" id="t56" style="left:6px;top:241.61px;font-size:8.70px;color:#333;font-weight:bold;font-family:'Liberation Sans',sans-serif;;transform:scaleX(0.8258);">2</span>
<span class="t" id="t57" style="left:36px;top:245.72px;font-size:7.97px;color:#000;font-weight:normal;font-family:'Liberation Sans',sans-serif;-webkit-text-stroke:0.25px #000;transform:scaleX(0.6279);">Basics…..what is IPR ?</span>
<div class="a" style="left:13px;top:470px;width:97px;height:75px;background:#fff;box-shadow:1px 1px 1px rgba(0,0,0,.25)"></div>
<span class="t" id="t58" style="left:337.5px;top:264.86px;font-size:28.99px;color:#111;font-weight:normal;font-family:'Liberation Sans',sans-serif;;transform:scaleX(0.7521);">IPR-Protecting ‘creativity’</span>
<span class="t" id="t59" style="left:391px;top:344.75px;font-size:20.29px;color:#8a8a8a;font-weight:normal;font-family:'Liberation Sans',sans-serif;;transform:scaleX(0.7474);">Dr. Radhika Sharma</span>
<svg style="left:413px;top:363.5px" width="58" height="3"><path d="M0 2 L1.5 0.6 L3.0 2.2 L4.5 0.6 L6.0 2.2 L7.5 0.6 L9.0 2.2 L10.5 0.6 L12.0 2.2 L13.5 0.6 L15.0 2.2 L16.5 0.6 L18.0 2.2 L19.5 0.6 L21.0 2.2 L22.5 0.6 L24.0 2.2 L25.5 0.6 L27.0 2.2 L28.5 0.6 L30.0 2.2 L31.5 0.6 L33.0 2.2 L34.5 0.6 L36.0 2.2 L37.5 0.6 L39.0 2.2 L40.5 0.6 L42.0 2.2 L43.5 0.6 L45.0 2.2 L46.5 0.6 L48.0 2.2 L49.5 0.6 L51.0 2.2 L52.5 0.6 L54.0 2.2 L55.5 0.6 L57.0 2.2" stroke="#e05050" stroke-width="0.7" fill="none"/></svg>
<span class="t" id="t60" style="left:366.5px;top:377.98px;font-size:20.72px;color:#8a8a8a;font-weight:normal;font-family:'Liberation Sans',sans-serif;;transform:scaleX(0.7337);">Associate Professor- IISDU</span>
<span class="t" id="t61" style="left:357px;top:411.75px;font-size:20.29px;color:#8a8a8a;font-weight:normal;font-family:'Liberation Sans',sans-serif;;transform:scaleX(0.7906);">Head- Dept of Biotechnology</span>
<svg style="left:790px;top:113px" width="7" height="4"><path d="M0 4 L3.5 0 L7 4Z" fill="#444"/></svg>
<div class="a" style="left:790px;top:123px;width:9px;height:13px;background:linear-gradient(90deg,#f9fafb,#e6e9ed);border:1px solid #b7bec8;border-radius:2px"></div>
<div class="a" style="left:792px;top:127px;width:5px;height:1px;background:#777"></div><div class="a" style="left:792px;top:129px;width:5px;height:1px;background:#777"></div><div class="a" style="left:792px;top:131px;width:5px;height:1px;background:#777"></div>
<svg style="left:792px;top:470px" width="6" height="4"><path d="M0 0 L6 0 L3 4Z" fill="#555"/></svg>
<div class="a" style="left:788px;top:477px;width:12px;height:1px;background:#c8cdd4"></div>
<svg style="left:793px;top:483px" width="6" height="8"><path d="M0 3.5 L3 0.5 L6 3.5Z M0 7.5 L3 4.5 L6 7.5Z" fill="#222"/></svg>
<svg style="left:793px;top:494px" width="6" height="8"><path d="M0 0.5 L6 0.5 L3 3.5Z M0 4.5 L6 4.5 L3 7.5Z" fill="#222"/></svg>
<svg style="left:653px;top:107px" width="134" height="101" viewBox="653 107 134 101">
<defs>
<filter id="b1" x="-20%" y="-20%" width="140%" height="140%"><feGaussianBlur stdDeviation="1.2"/></filter>
<filter id="b2" x="-50%" y="-50%" width="200%" height="200%"><feGaussianBlur stdDeviation="3"/></filter>
<filter id="b05" x="-20%" y="-20%" width="140%" height="140%"><feGaussianBlur stdDeviation="0.6"/></filter>
<linearGradient id="bg1" x1="0" y1="0" x2="1" y2="0"><stop offset="0" stop-color="#5b5754"/><stop offset="0.45" stop-color="#4f4845"/><stop offset="0.85" stop-color="#3b3432"/><stop offset="1" stop-color="#1f1b1a"/></linearGradient>
<linearGradient id="bgv" x1="0" y1="0" x2="0" y2="1"><stop offset="0" stop-color="#000" stop-opacity="0.1"/><stop offset="0.4" stop-color="#000" stop-opacity="0"/><stop offset="1" stop-color="#000" stop-opacity="0.25"/></linearGradient>
<radialGradient id="face1" cx="0.5" cy="0.45" r="0.6"><stop offset="0" stop-color="#b08272"/><stop offset="0.6" stop-color="#946454"/><stop offset="1" stop-color="#5a3a30"/></radialGradient>
</defs>
<rect x="653" y="107" width="134" height="101" fill="url(#bg1)"/>
<rect x="653" y="107" width="134" height="101" fill="url(#bgv)"/>
<g filter="url(#b05)"><path d="M684 110 L717 110 L717 132 L706 172 L676 172 Z" fill="#1c1818"/>
<path d="M690 112 Q700 120 694 140" stroke="#3a3432" stroke-width="3" fill="none" filter="url(#b1)"/>
<path d="M691 172 Q690 140 694 128 Q699 118 709 118 Q721 118 725 130 Q729 155 735 172 Q742 188 748 204 L728 204 Q722 185 721 165 L720 138 Q712 128 700 134 L696 150 Z" fill="#171313" filter="url(#b1)"/>
<path d="M694.5 146 Q694 127 707.5 127 Q721 127 721 146 Q721.5 162 714 170 Q708 175 701 170 Q694.5 162 694.5 146Z" fill="url(#face1)" filter="url(#b05)"/>
<path d="M698 144 Q702 146 705 144 M710 144 Q713 146 717 144" stroke="#3a2420" stroke-width="1.2" fill="none" filter="url(#b05)"/>
<path d="M706 146 Q705 152 707 154" stroke="#6a4438" stroke-width="1" fill="none" filter="url(#b05)"/>
<path d="M702 160 Q707 163 713 160" stroke="#8a4c48" stroke-width="1.6" fill="none" filter="url(#b05)"/>
<path d="M701 168 Q707 174 714 168 L713 180 L702 180 Z" fill="#6a4a40" filter="url(#b1)"/>
<path d="M674 208 Q676 188 694 180 L722 178 Q740 184 746 208 Z" fill="#1a1c2c" filter="url(#b05)"/>
<g fill="#8a90c8" opacity="0.85" filter="url(#b05)"><circle cx="720" cy="186" r="1.6"/><circle cx="728" cy="192" r="1.4"/><circle cx="714" cy="197" r="1.5"/><circle cx="735" cy="200" r="1.3"/><circle cx="724" cy="203" r="1.5"/><circle cx="708" cy="190" r="1.2"/><circle cx="740" cy="194" r="1.2"/><circle cx="718" cy="180" r="1.1"/></g>
<g fill="#c08aaa" opacity="0.8"><circle cx="731" cy="186" r="1"/><circle cx="712" cy="204" r="1"/><circle cx="738" cy="205" r="1"/></g>
<path d="M700 166 L701 195 M719 164 L713 198" stroke="#c8c8d0" stroke-width="0.7" opacity="0.75"/>
</g><rect x="653" y="192" width="56" height="16" fill="#202020" opacity="0.72"/>
</svg>
<span class="t" id="t62" style="left:656px;top:195.26px;font-size:10.87px;color:#e6e4d6;font-weight:normal;font-family:'Liberation Sans',sans-serif;;transform:scaleX(0.7179);">Poorvi Agarwal</span>
<svg style="left:653px;top:208px" width="134" height="101" viewBox="653 208 134 101">
<defs>
<radialGradient id="face2" cx="0.5" cy="0.42" r="0.62"><stop offset="0" stop-color="#ecc6b6"/><stop offset="0.65" stop-color="#d4a292"/><stop offset="1" stop-color="#9a6a5c"/></radialGradient>
<clipPath id="cp2"><rect x="691" y="209" width="56" height="99"/></clipPath>
</defs>
<rect x="653" y="208" width="134" height="101" fill="#262626"/>
<g clip-path="url(#cp2)"><g filter="url(#b05)">
<rect x="691" y="209" width="56" height="99" fill="#b9c2c2"/>
<rect x="691" y="209" width="6" height="99" fill="#d6dcdc"/>
<rect x="697" y="211" width="50" height="97" fill="#5a3630"/>
<rect x="699" y="213" width="48" height="10" fill="#3e4e4a"/>
<rect x="697" y="223" width="50" height="4" fill="#d8dede"/>
<rect x="725.5" y="212" width="3" height="40" fill="#d0d6d6"/>
<rect x="699" y="228" width="25" height="70" fill="#3a4a48"/>
<rect x="729" y="228" width="18" height="80" fill="#384846"/>
<path d="M699 246 H724 M699 262 H724 M729 244 H747 M729 260 H747 M729 276 H747" stroke="#5a3a34" stroke-width="1"/>
<rect x="715.5" y="209" width="21" height="8" fill="#dcc064"/>
<rect x="718" y="211" width="16" height="3" fill="#c88a4a" opacity="0.7"/>
</g>
<g filter="url(#b05)">
<path d="M704 290 Q702 258 708 244 Q714 234 723 234 Q735 235 740 248 Q745 266 742 292 L736 292 Q737 270 734 256 L712 256 Q709 272 710 292 Z" fill="#3a2620"/>
<path d="M708.5 258 Q708.5 241 723 241 Q737.5 241 737.5 258 Q738 276 731 284 Q723 290 715 284 Q708 276 708.5 258Z" fill="url(#face2)"/>
<path d="M713 258 Q716 260 719 258 M726 258 Q729 260 732 258" stroke="#4a2a26" stroke-width="1.3" fill="none"/>
<path d="M721 262 Q720 267 723 268" stroke="#b07a6a" stroke-width="1" fill="none"/>
<ellipse cx="722.5" cy="273" rx="5" ry="2.3" fill="#4a1c1e"/>
<path d="M691 308 Q692 290 704 284 L713 282 L716 300 L730 300 L738 282 Q746 286 747 308 Z" fill="#c8306a"/>
<path d="M700 290 L705 300 M740 292 L744 302 M694 300 L698 306" stroke="#2a1a20" stroke-width="1.6"/>
<path d="M713 288 Q718 280 726 284 L730 298 L716 300 Z" fill="#e0b2a0"/>
</g></g>
<path d="M726 293 L742 289" stroke="#3a8ae0" stroke-width="1.6"/>
<rect x="654" y="292" width="70" height="16" fill="#262626" opacity="0.78"/>
<rect x="653.5" y="208.5" width="133" height="100" fill="none" stroke="#5f8e1f" stroke-width="1.4"/>
</svg>
<span class="t" id="t63" style="left:656px;top:295.26px;font-size:10.87px;color:#e6e4d6;font-weight:normal;font-family:'Liberation Sans',sans-serif;;transform:scaleX(0.6921);">Dr Radhika Sharma</span>
<div class="a" style="left:653px;top:309px;width:134px;height:100px;background:#232323"></div>
<div class="a" style="left:653px;top:409px;width:134px;height:1px;background:#1a1a1a"></div>
<div class="a" style="left:653px;top:410px;width:134px;height:100px;background:#232323"></div>
<span class="t" id="t64" style="left:696.5px;top:353.14px;font-size:11.59px;color:#e9e9e9;font-weight:bold;font-family:'Liberation Sans',sans-serif;;transform:scaleX(0.7524);">Neha Batra</span>
<span class="t" id="t65" style="left:690px;top:453.38px;font-size:12.03px;color:#e9e9e9;font-weight:bold;font-family:'Liberation Sans',sans-serif;;transform:scaleX(0.7146);">Taniya sharma</span>
<div class="a" style="left:654px;top:394px;width:11px;height:12px;background:#2d2d2d"></div>
<svg style="left:655px;top:395px" width="9" height="10"><rect x="3" y="0.5" width="3.5" height="6" rx="1.7" fill="#e05252"/><path d="M1.8 5 Q2 8 4.8 8 Q7.6 8 7.8 5 M4.8 8 V9.5 M3 9.5 H6.5" stroke="#e05252" stroke-width="0.9" fill="none"/><path d="M0.5 9.5 L8.5 0.5" stroke="#e05252" stroke-width="1.1"/></svg>
<div class="a" style="left:654px;top:494px;width:11px;height:12px;background:#2d2d2d"></div>
<svg style="left:655px;top:495px" width="9" height="10"><rect x="3" y="0.5" width="3.5" height="6" rx="1.7" fill="#e05252"/><path d="M1.8 5 Q2 8 4.8 8 Q7.6 8 7.8 5 M4.8 8 V9.5 M3 9.5 H6.5" stroke="#e05252" stroke-width="0.9" fill="none"/><path d="M0.5 9.5 L8.5 0.5" stroke="#e05252" stroke-width="1.1"/></svg>
<span class="t" id="t66" style="left:134px;top:527.91px;font-size:13.04px;color:#333;font-weight:normal;font-family:'Liberation Sans',sans-serif;;transform:scaleX(0.6950);">Click to add notes</span>
<div class="a" style="left:600px;top:510px;width:187px;height:12px;overflow:hidden"><span class="t" style="left:28px;top:-3px;font-size:16px;color:#bfc2c6;transform:scaleX(0.72)">Activate Windows</span></div>
<span class="t" id="t67" style="left:628px;top:529.14px;font-size:11.59px;color:#b4b4b4;font-weight:normal;font-family:'Liberation Sans',sans-serif;;transform:scaleX(0.7605);">Go to Settings to activate Windows.</span>
<svg style="left:792px;top:528px" width="6" height="4"><path d="M0 4 L3 0 L6 4Z" fill="#666"/></svg>
<svg style="left:792px;top:542px" width="6" height="4"><path d="M0 0 L6 0 L3 4Z" fill="#666"/></svg>
<div class="a" style="left:0;top:257px;width:225px;height:275px;background:#fff;box-shadow:1px 1px 2px rgba(0,0,0,.25);border-right:1px solid #c0c0c0"></div>
<div class="a" style="left:5px;top:263.5px;width:9px;height:10.5px;background:#2d8cff;border-radius:3px"></div>
<svg style="left:6px;top:266px" width="7" height="5"><rect x="0.5" y="0.5" width="4" height="4" rx="0.8" fill="#fff"/><path d="M4.5 2.5 L7 1 V4Z" fill="#fff"/></svg>
<span class="t" id="t68" style="left:16.5px;top:263.76px;font-size:10.87px;color:#6c6c7c;font-weight:normal;font-family:'Liberation Sans',sans-serif;;transform:scaleX(0.6260);">Participants (33)</span>
<div class="a" style="left:154px;top:269px;width:7px;height:1px;background:#777"></div>
<div class="a" style="left:181px;top:265px;width:6px;height:7px;border:1px solid #777"></div>
<svg style="left:207px;top:265px" width="7" height="7"><path d="M0 0 L7 7 M7 0 L0 7" stroke="#777" stroke-width="0.9"/></svg>
<div class="a" style="left:10px;top:289px;width:205px;height:24.5px;border:1px solid #cbc7dc;border-radius:4px"></div>
<svg style="left:16.5px;top:297.5px" width="8" height="9"><circle cx="3.5" cy="3.7" r="3" stroke="#666" stroke-width="0.9" fill="none"/><path d="M5.6 5.9 L7.6 8.4" stroke="#666" stroke-width="1"/></svg>
<span class="t" id="t69" style="left:26.5px;top:296.26px;font-size:10.87px;color:#555;font-weight:normal;font-family:'Liberation Sans',sans-serif;;transform:scaleX(0.7142);">Find a participant</span>
<div class="a" style="left:217px;top:313px;width:6px;height:182px;background:#f3f2f7;border-radius:3px"></div>
<div class="a" style="left:218px;top:316px;width:4.5px;height:33px;background:#c5c5cc;border-radius:2px"></div>
<div class="a" style="left:10px;top:321px;width:15.5px;height:20px;background:#dc5c17;border-radius:4px"></div>
<span class="t" id="t70" style="left:13.0px;top:325.88px;font-size:10.14px;color:#fff;font-weight:bold;font-family:'Liberation Sans',sans-serif;;transform:scaleX(0.6753);">PA</span>
<span class="t" id="t71" style="left:32px;top:326.33px;font-size:10.43px;color:#474752;font-weight:normal;font-family:'Liberation Sans',sans-serif;;transform:scaleX(0.7352);">Poorvi Agarwal (Host, me)</span>
<svg style="left:10px;top:352.5px" width="15.5" height="20" viewBox="0 0 15.5 20"><defs><clipPath id="av"><rect width="15.5" height="20" rx="4"/></clipPath><radialGradient id="avf" cx="0.5" cy="0.45" r="0.6"><stop offset="0" stop-color="#ecc8c0"/><stop offset="1" stop-color="#c89890"/></radialGradient></defs>
<g clip-path="url(#av)"><rect width="15.5" height="20" fill="#fff"/><path d="M0 20 V6 Q0 1 7.8 1 Q15.5 1 15.5 6 V20Z" fill="#2e1e1a"/><path d="M4 12 Q4 5 8 5 Q12 5 12 12 Q12 18 8 18.5 Q4 18 4 12Z" fill="url(#avf)"/><path d="M5.5 9.8 H7 M9 9.8 H10.5" stroke="#5a3a36" stroke-width="0.8"/><path d="M6.8 14.2 H9.2" stroke="#b06060" stroke-width="0.9"/><path d="M2 3 Q4 7 3 12" stroke="#6a5048" stroke-width="1" fill="none"/></g></svg>
<span class="t" id="t72" style="left:32px;top:358.33px;font-size:10.43px;color:#474752;font-weight:normal;font-family:'Liberation Sans',sans-serif;;transform:scaleX(0.7101);">Dr Radhika Sharma</span>
<div class="a" style="left:10px;top:385px;width:15.5px;height:20px;background:#9145b8;border-radius:4px"></div>
<span class="t" id="t73" style="left:12.0px;top:389.88px;font-size:10.14px;color:#fff;font-weight:bold;font-family:'Liberation Sans',sans-serif;;transform:scaleX(0.6984);">AM</span>
<span class="t" id="t74" style="left:32px;top:390.33px;font-size:10.43px;color:#474752;font-weight:normal;font-family:'Liberation Sans',sans-serif;;transform:scaleX(0.7417);">Ambalika Mathur</span>
<div class="a" style="left:10px;top:417px;width:15.5px;height:20px;background:#1fa386;border-radius:4px"></div>
<span class="t" id="t75" style="left:13.0px;top:421.88px;font-size:10.14px;color:#fff;font-weight:bold;font-family:'Liberation Sans',sans-serif;;transform:scaleX(0.6154);">AK</span>
<span class="t" id="t76" style="left:32px;top:422.33px;font-size:10.43px;color:#474752;font-weight:normal;font-family:'Liberation Sans',sans-serif;;transform:scaleX(0.7174);">Ariba Khan</span>
<div class="a" style="left:10px;top:449px;width:15.5px;height:20px;background:#1fa386;border-radius:4px"></div>
<span class="t" id="t77" style="left:13.0px;top:453.88px;font-size:10.14px;color:#fff;font-weight:bold;font-family:'Liberation Sans',sans-serif;;transform:scaleX(0.6154);">CK</span>
<span class="t" id="t78" style="left:32px;top:454.33px;font-size:10.43px;color:#474752;font-weight:normal;font-family:'Liberation Sans',sans-serif;;transform:scaleX(0.7035);">Chhaya khandelwal</span>
<div class="a" style="left:0;top:481px;width:216px;height:9px;overflow:hidden"><div class="a" style="left:10px;top:0;width:15.5px;height:20px;background:#c8402c;border-radius:4px"></div><span class="t" style="left:14px;top:6.5px;font-size:10px;color:#fff;font-weight:bold">D</span><span class="t" style="left:32px;top:7px;font-size:11px;color:#444;transform:scaleX(0.85);transform-origin:0 0">Divya ki</span></div>
<div class="a" style="left:173px;top:327px;width:9.5px;height:9px;background:#17a83a;border-radius:1.5px"></div>
<svg style="left:175px;top:328.5px" width="5" height="6"><path d="M2.5 0 L5 2.5 H3.2 V6 H1.8 V2.5 H0Z" fill="#fff"/></svg>
<svg style="left:187px;top:326px" width="7" height="11"><rect x="2" y="0.5" width="3" height="6.5" rx="1.5" fill="none" stroke="#8a8a96" stroke-width="0.9"/><path d="M0.7 5 Q0.7 8.5 3.5 8.5 Q6.3 8.5 6.3 5 M3.5 8.5 V10.5 M1.5 10.5 H5.5" stroke="#8a8a96" stroke-width="0.9" fill="none"/></svg>
<svg style="left:201px;top:328px" width="11" height="8"><rect x="0.5" y="0.5" width="7" height="7" rx="1" fill="none" stroke="#8a8a96" stroke-width="0.9"/><path d="M7.5 3 L10.5 1 V7 L7.5 5" stroke="#8a8a96" stroke-width="0.9" fill="none"/></svg>
<svg style="left:187px;top:358px" width="7" height="11"><rect x="2" y="0.5" width="3" height="6.5" rx="1.5" fill="none" stroke="#8a8a96" stroke-width="0.9"/><path d="M0.7 5 Q0.7 8.5 3.5 8.5 Q6.3 8.5 6.3 5 M3.5 8.5 V10.5 M1.5 10.5 H5.5" stroke="#8a8a96" stroke-width="0.9" fill="none"/></svg>
<svg style="left:201px;top:360px" width="11" height="8"><rect x="0.5" y="0.5" width="7" height="7" rx="1" fill="none" stroke="#8a8a96" stroke-width="0.9"/><path d="M7.5 3 L10.5 1 V7 L7.5 5" stroke="#8a8a96" stroke-width="0.9" fill="none"/></svg>
<svg style="left:188px;top:390px" width="7" height="11"><rect x="2" y="0.5" width="3" height="6.5" rx="1.5" fill="none" stroke="#e34c4c" stroke-width="0.9"/><path d="M0.7 5 Q0.7 8.5 3.5 8.5 Q6.3 8.5 6.3 5 M3.5 8.5 V10.5 M1.5 10.5 H5.5" stroke="#e34c4c" stroke-width="0.9" fill="none"/></svg>
<svg style="left:187px;top:390px" width="9" height="11"><path d="M0.5 10.5 L8.5 0.5" stroke="#e34c4c" stroke-width="0.9"/></svg>
<svg style="left:201px;top:392px" width="11" height="8"><rect x="0.5" y="0.5" width="7" height="7" rx="1" fill="none" stroke="#e34c4c" stroke-width="0.9"/><path d="M7.5 3 L10.5 1 V7 L7.5 5" stroke="#e34c4c" stroke-width="0.9" fill="none"/></svg>
<svg style="left:201px;top:390px" width="11" height="11"><path d="M0.5 10.5 L10 0.5" stroke="#e34c4c" stroke-width="0.9"/></svg>
<svg style="left:188px;top:422px" width="7" height="11"><rect x="2" y="0.5" width="3" height="6.5" rx="1.5" fill="none" stroke="#e34c4c" stroke-width="0.9"/><path d="M0.7 5 Q0.7 8.5 3.5 8.5 Q6.3 8.5 6.3 5 M3.5 8.5 V10.5 M1.5 10.5 H5.5" stroke="#e34c4c" stroke-width="0.9" fill="none"/></svg>
<svg style="left:187px;top:422px" width="9" height="11"><path d="M0.5 10.5 L8.5 0.5" stroke="#e34c4c" stroke-width="0.9"/></svg>
<svg style="left:201px;top:424px" width="11" height="8"><rect x="0.5" y="0.5" width="7" height="7" rx="1" fill="none" stroke="#e34c4c" stroke-width="0.9"/><path d="M7.5 3 L10.5 1 V7 L7.5 5" stroke="#e34c4c" stroke-width="0.9" fill="none"/></svg>
<svg style="left:201px;top:422px" width="11" height="11"><path d="M0.5 10.5 L10 0.5" stroke="#e34c4c" stroke-width="0.9"/></svg>
<svg style="left:188px;top:454px" width="7" height="11"><rect x="2" y="0.5" width="3" height="6.5" rx="1.5" fill="none" stroke="#e34c4c" stroke-width="0.9"/><path d="M0.7 5 Q0.7 8.5 3.5 8.5 Q6.3 8.5 6.3 5 M3.5 8.5 V10.5 M1.5 10.5 H5.5" stroke="#e34c4c" stroke-width="0.9" fill="none"/></svg>
<svg style="left:187px;top:454px" width="9" height="11"><path d="M0.5 10.5 L8.5 0.5" stroke="#e34c4c" stroke-width="0.9"/></svg>
<svg style="left:201px;top:456px" width="11" height="8"><rect x="0.5" y="0.5" width="7" height="7" rx="1" fill="none" stroke="#e34c4c" stroke-width="0.9"/><path d="M7.5 3 L10.5 1 V7 L7.5 5" stroke="#e34c4c" stroke-width="0.9" fill="none"/></svg>
<svg style="left:201px;top:454px" width="11" height="11"><path d="M0.5 10.5 L10 0.5" stroke="#e34c4c" stroke-width="0.9"/></svg>
<div class="a" style="left:180px;top:486px;width:36px;height:4px;overflow:hidden"><svg style="left:7px;top:0" width="9" height="11"><path d="M0.5 10.5 L8.5 0.5" stroke="#e34c4c" stroke-width="0.9"/></svg><div class="a" style="left:21px;top:2px;width:8px;height:3px;border:1px solid #e34c4c;border-bottom:none"></div></div>
<div class="a" style="left:37px;top:503.5px;width:25px;height:17px;background:#f0eff6;border-radius:4px"></div>
<span class="t" id="t79" style="left:41px;top:506.88px;font-size:10.14px;color:#444;font-weight:normal;font-family:'Liberation Sans',sans-serif;;transform:scaleX(0.7024);">Invite</span>
<div class="a" style="left:100px;top:503.5px;width:35px;height:17px;background:#f0eff6;border-radius:4px"></div>
<span class="t" id="t80" style="left:104px;top:506.88px;font-size:10.14px;color:#444;font-weight:normal;font-family:'Liberation Sans',sans-serif;;transform:scaleX(0.7497);">Mute All</span>
<div class="a" style="left:173px;top:503.5px;width:14px;height:17px;background:#f0eff6;border-radius:4px"></div>
<div class="a" style="left:176.5px;top:514px;width:1.2px;height:1.2px;background:#555"></div><div class="a" style="left:179.3px;top:514px;width:1.2px;height:1.2px;background:#555"></div><div class="a" style="left:182.1px;top:514px;width:1.2px;height:1.2px;background:#555"></div>
<span class="t" id="t81" style="left:5px;top:556.14px;font-size:9.13px;color:#454545;font-weight:normal;font-family:'Liberation Sans',sans-serif;;transform:scaleX(0.7096);">Slide 1 of 27</span>
<div class="a" style="left:47px;top:553px;width:1px;height:14px;background:#c3c8cf"></div>
<span class="t" id="t82" style="left:53px;top:556.14px;font-size:9.13px;color:#454545;font-weight:normal;font-family:'Liberation Sans',sans-serif;;transform:scaleX(0.7222);">"Office Theme"</span>
<div class="a" style="left:102px;top:553px;width:1px;height:14px;background:#c3c8cf"></div>
<span class="t" id="t83" style="left:108px;top:556.14px;font-size:9.13px;color:#454545;font-weight:normal;font-family:'Liberation Sans',sans-serif;;transform:scaleX(0.7372);">English (India)</span>
<div class="a" style="left:157px;top:553px;width:1px;height:14px;background:#c3c8cf"></div>
<div class="a" style="left:639px;top:552.5px;width:12px;height:14px;background:linear-gradient(#fde99a,#f9d35a);border:1px solid #e5b33a;border-radius:1px"></div>
<svg style="left:641px;top:555px" width="8" height="8"><rect x="0.5" y="0.5" width="7" height="7" fill="#fff" stroke="#444"/><path d="M3 0.5 V7.5 M3 4 H7.5" stroke="#444"/></svg>
<svg style="left:655px;top:555px" width="8" height="8"><rect x="0.5" y="0.5" width="3" height="3" fill="none" stroke="#666" stroke-width="0.8"/><rect x="4.5" y="0.5" width="3" height="3" fill="none" stroke="#666" stroke-width="0.8"/><rect x="0.5" y="4.5" width="3" height="3" fill="none" stroke="#666" stroke-width="0.8"/><rect x="4.5" y="4.5" width="3" height="3" fill="none" stroke="#666" stroke-width="0.8"/></svg>
<svg style="left:665px;top:555px" width="8" height="8"><path d="M0.5 1 L4 2 L7.5 1 V7 L4 8 L0.5 7Z M4 2 V8" fill="none" stroke="#666" stroke-width="0.8"/></svg>
<svg style="left:676px;top:555px" width="8" height="9"><rect x="0.5" y="0.5" width="7" height="5" fill="none" stroke="#666" stroke-width="0.8"/><path d="M4 5.5 V8.5 M2 8.5 H6" stroke="#666" stroke-width="0.8"/></svg>
<span class="t" id="t84" style="left:688px;top:556.14px;font-size:9.13px;color:#454545;font-weight:normal;font-family:'Liberation Sans',sans-serif;;transform:scaleX(0.7117);">70%</span>
<div class="a" style="left:705.5px;top:554.5px;width:9px;height:9px;border-radius:50%;border:1px solid #8a9098;background:linear-gradient(#fff,#e5e8ec)"></div>
<div class="a" style="left:708px;top:558.5px;width:4px;height:1px;background:#333"></div>
<div class="a" style="left:714px;top:558.5px;width:60px;height:1px;background:#9aa0a8"></div>
<div class="a" style="left:744px;top:556px;width:1px;height:6px;background:#bbb"></div>
<svg style="left:732px;top:553px" width="7" height="11"><path d="M0.5 0.5 H6.5 V7 L3.5 10.5 L0.5 7Z" fill="#f5f6f8" stroke="#7d848c" stroke-width="0.8"/></svg>
<div class="a" style="left:773.5px;top:554.5px;width:9px;height:9px;border-radius:50%;border:1px solid #8a9098;background:linear-gradient(#fff,#e5e8ec)"></div>
<div class="a" style="left:776px;top:558.5px;width:4px;height:1px;background:#333"></div><div class="a" style="left:777.5px;top:557px;width:1px;height:4px;background:#333"></div>
<div class="a" style="left:787px;top:553px;width:11px;height:13px;background:linear-gradient(#f6f7f9,#dfe3e8);border:1px solid #9aa2ab"></div>
<svg style="left:789px;top:555px" width="7" height="9"><path d="M0 0 L2 2 M7 0 L5 2 M0 9 L2 7 M7 9 L5 7" stroke="#444" stroke-width="0.9"/></svg>
<svg style="left:9px;top:578px" width="11" height="12"><path d="M0 1.6 L4.6 1 V5.6 H0Z M5.3 0.9 L11 0 V5.6 H5.3Z M0 6.3 H4.6 V11 L0 10.4Z M5.3 6.3 H11 V12 L5.3 11.1Z" fill="#fff"/></svg>
<svg style="left:35px;top:577px" width="11" height="14"><circle cx="6.8" cy="4.3" r="3.6" stroke="#222" stroke-width="1.1" fill="none"/><path d="M4.4 7 L0.6 12.5" stroke="#222" stroke-width="1.3"/></svg>
<span class="t" id="t85" style="left:51px;top:578.53px;font-size:12.32px;color:#333;font-weight:normal;font-family:'Liberation Sans',sans-serif;;transform:scaleX(0.6892);">Type here to search</span>
<div class="a" style="left:237px;top:577.5px;width:10px;height:12px;border:1.6px solid #fff;border-radius:50%"></div>
<svg style="left:266px;top:577px" width="11" height="13"><rect x="2.5" y="2.5" width="6" height="8" fill="none" stroke="#fff" stroke-width="1.1"/><path d="M0.5 0.5 V12.5 M10.5 0.5 V12.5" stroke="#fff" stroke-width="1"/></svg>
<svg style="left:295px;top:576px" width="14" height="14"><path d="M0 1 H5 L6.5 3 H14 V13 H0Z" fill="#e8b53a"/><rect x="0" y="4" width="14" height="9" fill="#f8d775"/><rect x="4" y="8" width="6" height="5" fill="#3a86c8"/></svg>
<div class="a" style="left:290px;top:598px;width:22px;height:2px;background:#7fbbec"></div>
<svg style="left:323px;top:576px" width="14" height="14"><path d="M0 5 L7 0 L14 5 V14 H0Z" fill="#1a8ad8"/><path d="M0 5 L7 10 L14 5" fill="#53b1f0"/><path d="M0 14 L7 8.5 L14 14" fill="#0f72c0"/></svg>
<div class="a" style="left:352px;top:576px;width:14px;height:14px;border-radius:50%;background:radial-gradient(circle at 45% 55%,#7542e5 0 25%,#ff8a16 30%,#ff3f36 80%)"></div>
<svg style="left:355px;top:574px" width="10" height="6"><path d="M0 6 Q3 0 10 1 Q6 2 5 6Z" fill="#ffbd4f"/></svg>
<div class="a" style="left:381px;top:576px;width:14px;height:14px;border-radius:50%;background:conic-gradient(from 30deg,#db4437 0 120deg,#f4c20d 120deg 240deg,#0f9d58 240deg 360deg)"></div>
<div class="a" style="left:384.5px;top:579.5px;width:7px;height:7px;border-radius:50%;background:#4285f4;border:1.2px solid #fff"></div>
<div class="a" style="left:376px;top:598px;width:23px;height:2px;background:#7fbbec"></div>
<div class="a" style="left:409px;top:575px;width:14px;height:15px;border-radius:50%;background:#2a4a8a"></div>
<svg style="left:411px;top:576px" width="11" height="12"><path d="M2 11 L4 4 L10 0 L8 7Z" fill="#e8ecf4"/></svg>
<div class="a" style="left:438px;top:576px;width:14px;height:14px;border-radius:50%;background:conic-gradient(from 200deg,#35c1f1 0 120deg,#0c59a4 120deg 250deg,#5ccd46 250deg 360deg)"></div>
<div class="a" style="left:442px;top:581px;width:6px;height:5px;border-radius:50%;background:#1b2a3a"></div>
<svg style="left:466px;top:575px" width="15" height="16"><circle cx="11" cy="3" r="2" fill="#7b83eb"/><rect x="8" y="5.5" width="6" height="6" rx="2" fill="#7b83eb"/><circle cx="7" cy="2.5" r="2.3" fill="#5059c9"/><rect x="1" y="4" width="9" height="9" rx="1" fill="#4b53bc"/><path d="M3 6 H8 M5.5 6 V11" stroke="#fff" stroke-width="1.2"/><circle cx="12" cy="13" r="2.8" fill="#e02a2a"/></svg>
<div class="a" style="left:462px;top:598px;width:23px;height:2px;background:#7fbbec"></div>
<svg style="left:495px;top:575px" width="14" height="15"><rect x="3" y="0.5" width="10.5" height="14" fill="#fbe6dc" stroke="#d24b1f" stroke-width="0.8"/><rect x="0" y="2.5" width="9" height="10" fill="#d24b1f"/><path d="M2.5 10.5 V4.5 H5 Q7 4.5 7 6.5 Q7 8.5 5 8.5 H2.5" stroke="#fff" stroke-width="1.2" fill="none"/></svg>
<div class="a" style="left:491px;top:598px;width:23px;height:2px;background:#7fbbec"></div>
<svg style="left:524px;top:575px" width="14" height="15"><rect x="3" y="0.5" width="10.5" height="14" fill="#e2f1e2" stroke="#1f7a3a" stroke-width="0.8"/><rect x="0" y="2.5" width="9" height="10" fill="#1f7a3a"/><path d="M2 4.5 L7 10.5 M7 4.5 L2 10.5" stroke="#fff" stroke-width="1.2"/></svg>
<div class="a" style="left:520px;top:598px;width:23px;height:2px;background:#7fbbec"></div>
<div class="a" style="left:553px;top:575px;width:14px;height:15px;border-radius:4px;background:#3f8ef5"></div>
<svg style="left:555.5px;top:579.5px" width="9" height="6"><rect x="0" y="0" width="5.5" height="6" rx="1" fill="#fff"/><path d="M6 2 L9 0 V6 L6 4Z" fill="#fff"/></svg>
<div class="a" style="left:549px;top:598px;width:23px;height:2px;background:#7fbbec"></div>
<span class="t" id="t86" style="left:634px;top:578.64px;font-size:11.59px;color:#e6e6e6;font-weight:normal;font-family:'Liberation Sans',sans-serif;;transform:scaleX(0.5885);">Desktop</span>
<span class="t" id="t87" style="left:664px;top:572.34px;font-size:7.25px;color:#e6e6e6;font-weight:normal;font-family:'Liberation Sans',sans-serif;;transform:scaleX(1.2355);">»</span>
<svg style="left:675px;top:583px" width="8" height="5"><path d="M0.5 4.5 L4 1 L7.5 4.5" stroke="#eee" stroke-width="1.1" fill="none"/></svg>
<svg style="left:688px;top:580px" width="10" height="10"><rect x="0.5" y="2" width="3" height="6" fill="none" stroke="#eee" stroke-width="0.9"/><rect x="4" y="3" width="6" height="6" fill="#ddd"/><rect x="1" y="0" width="2" height="2" fill="#eee"/></svg>
<svg style="left:703px;top:579px" width="10" height="11"><path d="M1.5 10.5 A8.5 8.5 0 0 1 9.5 1.5 M1.5 10.5 A6 6 0 0 1 7 4.5 M1.5 10.5 A3.5 3.5 0 0 1 4.5 7.5" stroke="#eee" stroke-width="1.1" fill="none"/><circle cx="1.8" cy="9.8" r="1" fill="#eee"/></svg>
<svg style="left:716px;top:579px" width="11" height="10"><path d="M0.5 3.5 H2.5 L5 1 V9 L2.5 6.5 H0.5Z" fill="none" stroke="#eee" stroke-width="0.9"/><path d="M6.5 3 Q8 5 6.5 7 M8 1.5 Q10.5 5 8 8.5" stroke="#eee" stroke-width="0.9" fill="none"/></svg>
<span class="t" id="t88" style="left:740px;top:571.64px;font-size:11.59px;color:#eee;font-weight:normal;font-family:'Liberation Sans',sans-serif;;transform:scaleX(0.5175);">10:34</span>
<span class="t" id="t89" style="left:731px;top:585.14px;font-size:11.59px;color:#eee;font-weight:normal;font-family:'Liberation Sans',sans-serif;;transform:scaleX(0.5571);">07-06-2021</span>
<svg style="left:776px;top:578px" width="11" height="13"><path d="M0.5 0.5 H10.5 V9.5 H5 L2 12.5 V9.5 H0.5Z" fill="#f2f2f2"/><path d="M2.5 3 H8.5 M2.5 5 H8.5 M2.5 7 H8.5" stroke="#1b2a3a" stroke-width="0.8"/></svg>
<div class="a" style="left:781px;top:584px;width:10px;height:11px;border-radius:50%;background:#1c1c1c;border:1px solid #bbb"></div>
<span class="t" id="t90" style="left:783.5px;top:584.99px;font-size:9.42px;color:#fff;font-weight:bold;font-family:'Liberation Sans',sans-serif;;transform:scaleX(0.9552);">2</span>
</body></html>
